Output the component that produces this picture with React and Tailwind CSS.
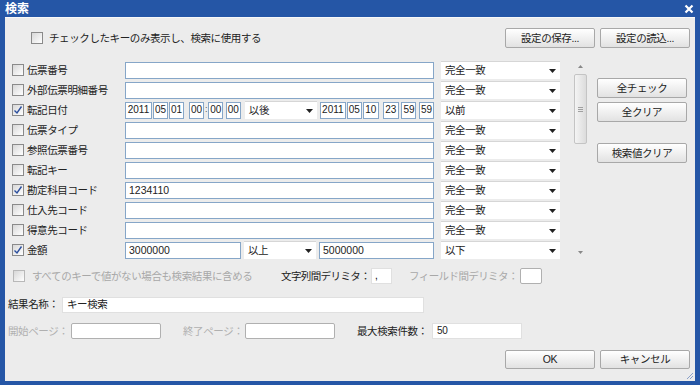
import React from 'react';

const FONT = "font-['Liberation_Sans','Noto_Sans_CJK_JP',sans-serif]";
const T = 'text-[10.5px] tracking-[-0.4px] whitespace-nowrap leading-none';

function Check({ checked, disabled }) {
  return (
    <span className={`w-[12px] h-[12px] shrink-0 border ${disabled ? 'border-[#b8b8b8]' : 'border-[#8a8a8a]'} bg-linear-to-br from-[#d8d8d8] to-white flex items-center justify-center`}>
      {checked && (
        <svg width="10" height="10" viewBox="0 0 10 10">
          <path d="M1.5 5.5 L4 8 L8.5 1.5" fill="none" stroke="#2c4f9e" strokeWidth="1.4" />
        </svg>
      )}
    </span>
  );
}

function Btn({ children, w = 'w-[90px]', h = 'h-[20px]' }) {
  return (
    <div className={`${w} ${h} shrink-0 border border-[#a8a8a8] rounded-[2px] bg-linear-to-b from-white to-[#e2e2e2] flex items-center justify-center ${T} text-[#222]`}>
      {children}
    </div>
  );
}

function Input({ w, value, h = 'h-[17px]', cls = '' }) {
  return (
    <div className={`${w} ${h} shrink-0 border border-[#86a6c8] bg-white flex items-center px-[3px] text-[10.5px] text-[#222] leading-none ${cls}`}>
      {value}
    </div>
  );
}

function Seg({ w, v }) {
  return (
    <div className={`${w} h-[17px] shrink-0 border border-[#86a6c8] bg-white flex items-center justify-center text-[10px] text-[#222] leading-none`}>
      {v}
    </div>
  );
}

function Select({ w, value }) {
  return (
    <div className={`${w} h-[18px] shrink-0 bg-white border-t border-[#d6d6d6] flex items-center justify-between pl-[4px] pr-[4px] ${T} text-[#222]`}>
      <span>{value}</span>
      <svg width="7" height="4" viewBox="0 0 7 4"><path d="M0 0 H7 L3.5 4 Z" fill="#222" /></svg>
    </div>
  );
}

const rows = [
  { label: '伝票番号' },
  { label: '外部伝票明細番号' },
  { label: '転記日付', checked: true, type: 'date' },
  { label: '伝票タイプ' },
  { label: '参照伝票番号' },
  { label: '転記キー' },
  { label: '勘定科目コード', checked: true, value: '1234110' },
  { label: '仕入先コード' },
  { label: '得意先コード' },
  { label: '金額', checked: true, type: 'range' },
];

function Row({ r }) {
  return (
    <div className="h-[20px] flex items-center">
      <div className={`w-[120px] shrink-0 flex items-center gap-[3px] pl-[7px] ${T} text-[#222]`}>
        <Check checked={r.checked} />
        <span>{r.label}</span>
      </div>
      {r.type === 'date' ? (
        <div className="w-[309px] flex items-center">
          <Seg w="w-[27px]" v="2011" />
          <Seg w="w-[15px] ml-[1px]" v="05" />
          <Seg w="w-[15px] ml-[1px]" v="01" />
          <Seg w="w-[15px] ml-[5px]" v="00" />
          <span className="w-[5px] text-center text-[9px] text-[#555]">:</span>
          <Seg w="w-[15px]" v="00" />
          <span className="w-[3px]"></span>
          <Seg w="w-[15px]" v="00" />
          <Select w="w-[72px] ml-[4px]" value="以後" />
          <Seg w="w-[26px] ml-[3px]" v="2011" />
          <Seg w="w-[15px] ml-[1px]" v="05" />
          <Seg w="w-[16px] ml-[1px]" v="10" />
          <Seg w="w-[16px] ml-[4px]" v="23" />
          <span className="w-[3px]"></span>
          <Seg w="w-[15px]" v="59" />
          <span className="w-[3px]"></span>
          <Seg w="w-[15px]" v="59" />
        </div>
      ) : r.type === 'range' ? (
        <div className="w-[309px] flex items-center">
          <Input w="w-[116px]" value="3000000" />
          <Select w="w-[72px] ml-[3px]" value="以上" />
          <Input w="w-[115px] ml-[3px]" value="5000000" />
        </div>
      ) : (
        <Input w="w-[309px]" value={r.value} />
      )}
      <Select
        w="w-[119px] ml-[7px]"
        value={r.type === 'date' ? '以前' : r.type === 'range' ? '以下' : '完全一致'}
      />
    </div>
  );
}

export default function App() {
  return (
    <div className={`w-[700px] h-[385px] bg-[#2556a6] flex flex-col ${FONT}`}>
      <div className="h-[17px] shrink-0 flex items-center justify-between pl-[5px] pr-[6px]">
        <span className="text-white text-[12px] font-bold leading-none">検索</span>
        <svg width="10" height="10" viewBox="0 0 10 10">
          <path d="M1.5 1.5 L8.5 8.5 M8.5 1.5 L1.5 8.5" stroke="white" strokeWidth="2.2" />
        </svg>
      </div>
      <div className="flex-1 mx-[5px] mb-[4px] bg-[#ececec] border-t border-[#f8f8f8] flex flex-col">
        {/* top row */}
        <div className="mt-[10px] h-[20px] flex items-center pl-[26px] pr-[5px]">
          <Check />
          <span className={`ml-[6px] ${T} text-[#222]`}>チェックしたキーのみ表示し、検索に使用する</span>
          <div className="ml-auto flex gap-[5px]">
            <Btn>設定の保存...</Btn>
            <Btn>設定の読込...</Btn>
          </div>
        </div>

        {/* grid rows */}
        <div className="mt-[12px] flex">
          <div className="flex flex-col w-[555px]">
            {rows.map((r, i) => (
              <Row key={i} r={r} />
            ))}
          </div>
          <div className="ml-[8px] w-[19px] h-[200px] flex flex-col items-center">
            <svg className="mt-[5px] ml-[6px]" width="5" height="3" viewBox="0 0 5 3"><path d="M0 3 H5 L2.5 0 Z" fill="#888" /></svg>
            <div className="mt-[6px] ml-[6px] w-[13px] h-[70px] border border-[#c4c4c4] rounded-[2px] bg-linear-to-r from-[#f4f4f4] to-[#dcdcdc] flex flex-col items-center justify-center gap-[1px]">
              <span className="w-[5px] h-px bg-[#a0a0a0]"></span>
              <span className="w-[5px] h-px bg-[#a0a0a0]"></span>
              <span className="w-[5px] h-px bg-[#a0a0a0]"></span>
            </div>
            <svg className="mt-auto mb-[6px] ml-[6px]" width="5" height="3" viewBox="0 0 5 3"><path d="M0 0 H5 L2.5 3 Z" fill="#888" /></svg>
          </div>
          <div className="ml-[10px] flex flex-col pt-[18px]">
            <Btn>全チェック</Btn>
            <div className="mt-[4px]"><Btn>全クリア</Btn></div>
            <div className="mt-[21px]"><Btn>検索値クリア</Btn></div>
          </div>
        </div>

        {/* bottom checkbox row */}
        <div className={`mt-[6px] h-[20px] flex items-center pl-[8px] ${T}`}>
          <Check disabled />
          <span className="ml-[7px] w-[249px] shrink-0 text-[#a8a8a8]">すべてのキーで値がない場合も検索結果に含める</span>
          <span className="shrink-0 tracking-[-0.6px] text-[#222]">文字列間デリミタ：</span>
          <div className="ml-[1px] w-[21px] h-[16px] shrink-0 bg-white border border-[#e0e0e0] text-[10px] flex items-center pl-[3px]">,</div>
          <span className="ml-[17px] shrink-0 tracking-[-0.6px] text-[#a8a8a8]">フィールド間デリミタ：</span>
          <div className="ml-[2px] w-[22px] h-[16px] shrink-0 bg-white border border-[#b0b0b0] rounded-[2px]"></div>
        </div>

        {/* result name */}
        <div className={`mt-[10px] h-[17px] flex items-center pl-[3px] ${T}`}>
          <span className="w-[54px] shrink-0 text-[#222]">結果名称：</span>
          <div className="w-[362px] h-[16px] bg-white border border-[#e0e0e0] flex items-center px-[4px] text-[#222]">キー検索</div>
        </div>

        {/* pages row */}
        <div className={`mt-[10px] h-[16px] flex items-center pl-[3px] ${T}`}>
          <span className="w-[63px] shrink-0 text-[#b0b0b0]">開始ページ：</span>
          <div className="w-[90px] h-[16px] shrink-0 bg-white border border-[#b0b0b0] rounded-[2px]"></div>
          <span className="ml-[22px] w-[62px] shrink-0 text-[#b0b0b0]">終了ページ：</span>
          <div className="w-[90px] h-[16px] shrink-0 bg-white border border-[#b0b0b0] rounded-[2px]"></div>
          <span className="ml-[22px] w-[75px] shrink-0 text-[#222]">最大検索件数：</span>
          <div className="w-[90px] h-[16px] shrink-0 bg-white border border-[#e0e0e0] flex items-center px-[4px] text-[10px] text-[#222]">50</div>
        </div>

        {/* OK row */}
        <div className="mt-[11px] h-[19px] flex items-center justify-end pr-[5px] gap-[5px]">
          <Btn h="h-[19px]">OK</Btn>
          <Btn h="h-[19px]">キャンセル</Btn>
        </div>
        <div className="flex-1 flex justify-end items-end pr-[1px] pb-[1px]">
          <svg width="8" height="8" viewBox="0 0 8 8">
            <path d="M7 1 L1 7 M7 4 L4 7" stroke="#8aa0c8" strokeWidth="1" />
          </svg>
        </div>
      </div>
    </div>
  );
}
